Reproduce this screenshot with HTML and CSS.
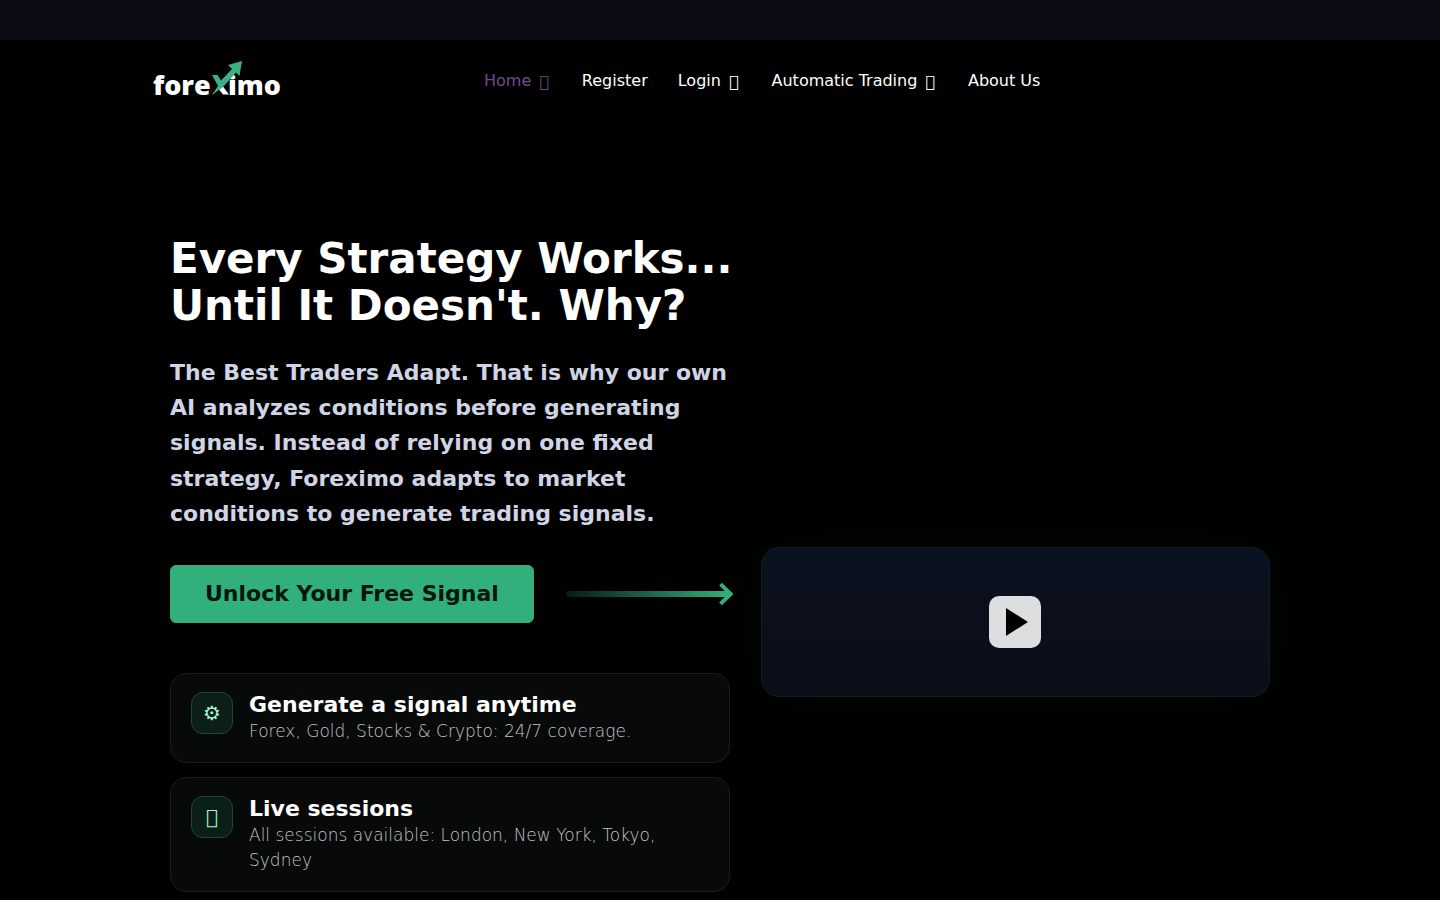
FILE: index.html
```
<!DOCTYPE html>
<html lang="en">
<head>
  <meta charset="utf-8">
  <meta name="viewport" content="width=device-width, initial-scale=1">
  <title>Foreximo</title>
  <link rel="stylesheet" href="styles.css">
</head>
<body>
  <div class="topbar"></div>

  <header class="header">
    <a class="logo" href="#" aria-label="Foreximo">
      <svg width="130" height="46" viewBox="0 -3 130 46">
        <text class="logo-text" x="1" y="35">fore</text>
        <text class="logo-text" x="76" y="35">imo</text>
        <path fill="#fff" d="M71 26.5 L77 34.5 H71 L67 29.5 Z"/>
        <path fill="#3bb083" d="M60 15 H65.5 L69 20.5 L80 9 L76 5 L90 1 L87.5 16 L84 12.5 L72 26 L59.5 35.5 L66 26 Z"/>
      </svg>
    </a>
    <nav class="nav">
      <a class="nav-link active" href="#">Home <span class="caret">&#xf107;</span></a>
      <a class="nav-link" href="#">Register</a>
      <a class="nav-link" href="#">Login <span class="caret">&#xf107;</span></a>
      <a class="nav-link" href="#">Automatic Trading <span class="caret">&#xf107;</span></a>
      <a class="nav-link" href="#">About Us</a>
    </nav>
  </header>

  <main class="hero">
    <section class="hero-content">
      <h1>Every Strategy Works...<br>Until It Doesn't. Why?</h1>
      <p class="lead">The Best Traders Adapt. That is why our own AI analyzes conditions before generating signals. Instead of relying on one fixed strategy, Foreximo adapts to market conditions to generate trading signals.</p>

      <div class="cta-row">
        <a class="cta" href="#">Unlock Your Free Signal</a>
        <div class="arrow"></div>
      </div>

      <div class="features">
        <article class="feature">
          <div class="feature-icon">&#x2699;</div>
          <div>
            <h2>Generate a signal anytime</h2>
            <p>Forex, Gold, Stocks &amp; Crypto: 24/7 coverage.</p>
          </div>
        </article>
        <article class="feature">
          <div class="feature-icon">&#xf017;</div>
          <div>
            <h2>Live sessions</h2>
            <p>All sessions available: London, New York, Tokyo, Sydney</p>
          </div>
        </article>
      </div>
    </section>

    <div class="video">
      <button type="button" class="play" aria-label="Play video">
        <svg width="22" height="28" viewBox="0 0 22 28"><path d="M0 0 L22 14 L0 28 Z"/></svg>
      </button>
    </div>
  </main>
</body>
</html>
```
FILE: styles.css
```
* {
  box-sizing: border-box;
}
body {
  margin: 0;
  height: 100vh;
  overflow: hidden;
  background: #000;
  color: #fff;
  font-family: "DejaVu Sans", sans-serif;
}
h1, h2, p {
  margin: 0;
}
a {
  color: inherit;
  text-decoration: none;
}
.topbar {
  height: 40px;
  background: #0c0b14;
}

/* Header */
.header {
  display: flex;
  align-items: center;
  max-width: 1140px;
  height: 80px;
  margin: 0 auto;
  padding-left: 2px;
}
.logo svg {
  display: block;
}
.logo-text {
  fill: #fff;
  font: 800 27px "Open Sans", sans-serif;
}
.nav {
  display: flex;
  gap: 30px;
  margin-left: 202px;
  padding-top: 4px;
  font-size: 16px;
  line-height: 24px;
  white-space: nowrap;
}
.nav-link {
  display: flex;
  gap: 8px;
}
.nav-link.active {
  color: #6f4a8e;
}
.caret {
  padding-right: 3px;
  line-height: 26px;
}

/* Hero */
.hero {
  display: grid;
  grid-template-columns: 11fr 10fr;
  gap: 31px;
  align-items: center;
  max-width: 1100px;
  margin: 0 auto;
  padding-top: 115px;
}
.hero-content {
  min-width: 0;
  padding-bottom: 117px;
}
h1 {
  font-size: 42px;
  line-height: 47px;
  white-space: nowrap;
}
.lead {
  margin-top: 26px;
  color: #cfd5e4;
  font-size: 22px;
  font-weight: 700;
  line-height: 1.6;
}
.cta-row {
  display: flex;
  align-items: center;
  gap: 32px;
  margin-top: 34px;
}
.cta {
  padding: 15px 34px;
  border: 1px solid #38a878;
  border-radius: 6px;
  background: #32b07c;
  color: #04150d;
  font-size: 22px;
  font-weight: 700;
  line-height: 26px;
  white-space: nowrap;
}
.arrow {
  position: relative;
  flex: 1;
  height: 6px;
  border-radius: 3px;
  background: linear-gradient(90deg, rgba(50, 176, 124, 0.15), #32b07c);
}
.arrow::after {
  content: "";
  position: absolute;
  top: -5px;
  right: 0;
  box-sizing: border-box;
  width: 16px;
  height: 16px;
  border-top: 4px solid #32b07c;
  border-right: 4px solid #32b07c;
  transform: rotate(45deg);
}

/* Feature cards */
.features {
  display: grid;
  gap: 14px;
  margin-top: 50px;
}
.feature {
  display: flex;
  gap: 16px;
  padding: 18px 20px;
  border: 1px solid #14201c;
  border-radius: 16px;
  background: #080909;
}
.feature-icon {
  display: flex;
  flex: none;
  align-items: center;
  justify-content: center;
  width: 42px;
  height: 42px;
  border: 1px solid #1d4936;
  border-radius: 12px;
  background: #0b1e17;
  color: #a7f3d0;
  font-size: 20px;
}
.feature h2 {
  margin-bottom: 2px;
  font-size: 22px;
  line-height: 25px;
}
.feature p {
  color: #c0c4c8;
  font-size: 17px;
  font-weight: 200;
  line-height: 25px;
}

/* Video */
.video {
  display: flex;
  align-items: center;
  justify-content: center;
  height: 150px;
  border: 1px solid #0d2020;
  border-radius: 18px;
  background: linear-gradient(#081221, #0b101b 35%, #0a0e19);
  box-shadow: 0 0 60px rgba(50, 176, 124, 0.05);
}
.play {
  display: flex;
  align-items: center;
  justify-content: center;
  width: 52px;
  height: 52px;
  padding: 0 0 0 4px;
  border: 0;
  border-radius: 10px;
  background: #dcdedf;
  cursor: pointer;
}
```
